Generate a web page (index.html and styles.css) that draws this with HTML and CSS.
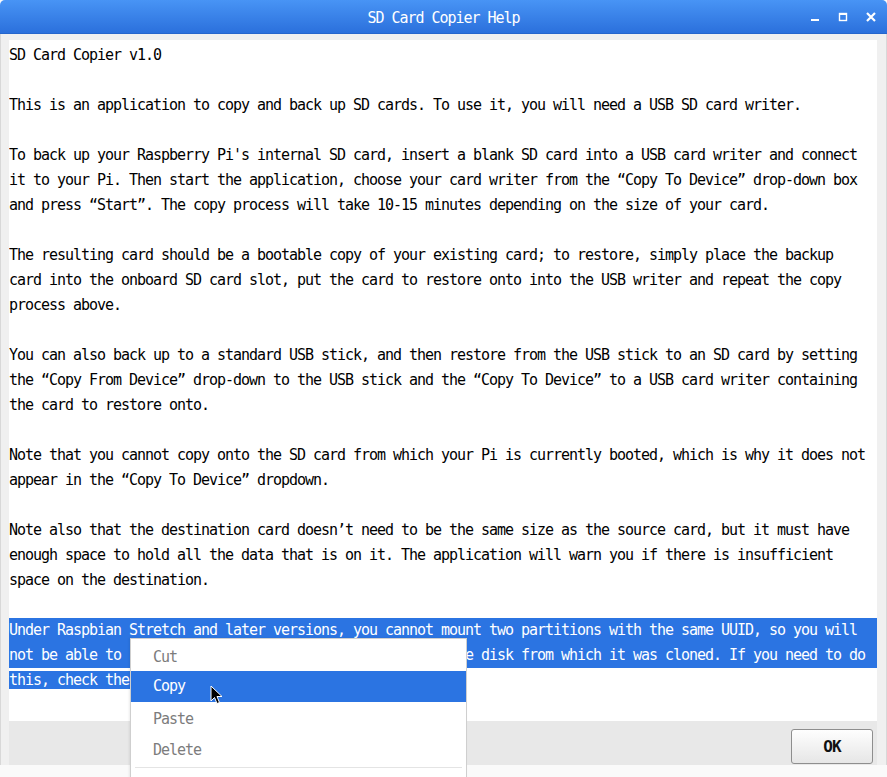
FILE: index.html
```html
<!DOCTYPE html>
<html lang="en">
<head>
    <meta charset="UTF-8">
    <title>SD Card Copier Help</title>
    <link rel="stylesheet" href="styles.css">
</head>
<body>
    <div class="window">
        <header class="titlebar">
            <span></span>
            <span class="title">SD Card Copier Help</span>
            <div class="controls">
                <svg width="12" height="12" viewBox="0 0 12 12"><rect x="2" y="8" width="8" height="2" fill="#fff"/></svg>
                <svg width="12" height="12" viewBox="0 0 12 12"><rect x="2.5" y="2.5" width="7" height="7" fill="none" stroke="#fff" stroke-width="1.4"/><rect x="2" y="2" width="8" height="2" fill="#fff"/></svg>
                <svg width="12" height="12" viewBox="0 0 12 12"><path d="M2 2 L10 10 M10 2 L2 10" stroke="#fff" stroke-width="2.2"/></svg>
            </div>
        </header>

        <div class="frame">
            <div class="textview">
                <p>SD Card Copier v1.0</p>
                <p>This is an application to copy and back up SD cards. To use it, you will need a USB SD card writer.</p>
                <p>To back up your Raspberry Pi's internal SD card, insert a blank SD card into a USB card writer and connect it to your Pi. Then start the application, choose your card writer from the “Copy To Device” drop-down box and press “Start”. The copy process will take 10-15 minutes depending on the size of your card.</p>
                <p>The resulting card should be a bootable copy of your existing card; to restore, simply place the backup card into the onboard SD card slot, put the card to restore onto into the USB writer and repeat the copy process above.</p>
                <p>You can also back up to a standard USB stick, and then restore from the USB stick to an SD card by setting the “Copy From Device” drop-down to the USB stick and the “Copy To Device” to a USB card writer containing the card to restore onto.</p>
                <p>Note that you cannot copy onto the SD card from which your Pi is currently booted, which is why it does not appear in the “Copy To Device” dropdown.</p>
                <p>Note also that the destination card doesn’t need to be the same size as the source card, but it must have enough space to hold all the data that is on it. The application will warn you if there is insufficient space on the destination.</p>
                <!-- last paragraph is selected; the part under the context menu is kept but not painted -->
                <div class="selected">
                    <div class="sel-line">Under Raspbian Stretch and later versions, you cannot mount two partitions with the same UUID, so you will</div>
                    <div class="sel-line">not be able to <span class="covered">mount a cloned SD card when booted from th</span>e disk from which it was cloned. If you need to do</div>
                    <div><span class="sel-text">this, check the<span class="covered"> “New Partition UUIDs” box before copying.</span></span></div>
                </div>
            </div>
            <div class="buttons">
                <button class="ok">OK</button>
            </div>
        </div>
        <div class="bottom"></div>

        <div class="menu">
            <div class="item disabled">Cut</div>
            <div class="item active">Copy</div>
            <div class="item disabled">Paste</div>
            <div class="item disabled">Delete</div>
            <div class="separator"></div>
        </div>

        <svg class="cursor" width="13" height="20" viewBox="0 0 13 20">
            <path d="M1 1 L1 16 L4.5 12.5 L7 18.5 L9.5 17.5 L7 11.5 L12 11.5 Z" fill="#000" stroke="#fff" stroke-width="1"/>
        </svg>
    </div>
</body>
</html>
```

FILE: styles.css
```css
* {
    margin: 0;
    padding: 0;
    box-sizing: border-box;
}

body {
    width: 887px;
    height: 777px;
    overflow: hidden;
    background: #fafafa;
    font-family: 'DejaVu Sans Mono', 'Liberation Mono', monospace;
    font-size: 15px;
    letter-spacing: -1.03px;
}

.window {
    position: relative;
    display: flex;
    flex-direction: column;
    height: 777px;
}

.titlebar {
    height: 34px;
    display: grid;
    grid-template-columns: 1fr auto 1fr;
    align-items: center;
    background: linear-gradient(#4894f5, #2b70dc);
    border-radius: 5px 5px 0 0;
    border-bottom: 1px solid #2566cc;
    color: white;
}

.title {
    padding-top: 3px;
}

.controls {
    display: flex;
    justify-content: flex-end;
    gap: 16px;
    padding-right: 10px;
}

.frame {
    flex: 1;
    display: flex;
    flex-direction: column;
    background: #f0f0f0;
    padding: 6px 9px 0 8px;
    border-left: 1px solid #d8d8d8;
    border-right: 1px solid #d8d8d8;
}

.textview {
    flex: 1;
    background: white;
    padding: 3px 0 0 0;
    line-height: 25px;
    color: #000;
    overflow: hidden;
}

.textview p {
    width: 860px;
    margin-bottom: 25px;
}

.sel-line {
    background: #2b74e2;
    color: white;
    white-space: nowrap;
}

.sel-text {
    background: #2b74e2;
    color: white;
    white-space: pre;
}

.covered {
    visibility: hidden;
}

.buttons {
    height: 44px;
    background: #e8e8e8;
    display: flex;
    justify-content: flex-end;
    align-items: flex-start;
    padding: 8px 4px 0 0;
}

.ok {
    width: 82px;
    height: 35px;
    border: 1px solid #8e8e8e;
    border-radius: 3px;
    background: linear-gradient(#fefefe, #e6e6e6);
    font-family: inherit;
    font-size: 16px;
    font-weight: bold;
    letter-spacing: -1px;
    color: #111;
}

.bottom {
    height: 12px;
    background: #fafafa;
}

.menu {
    position: absolute;
    left: 130px;
    top: 638px;
    width: 337px;
    height: 150px;
    background: white;
    border: 1px solid #cfcfcf;
    padding-top: 1px;
    box-shadow: -1px 0 2px rgba(0, 0, 0, 0.08);
}

.item {
    height: 31px;
    line-height: 31px;
    padding-left: 22px;
}

.item.disabled {
    color: #7c7c7c;
    padding-top: 2px;
}

.item.active {
    background: #2b74e2;
    color: white;
}

.separator {
    height: 1px;
    background: #e4e4e4;
    margin: 3px 4px 0;
}

.cursor {
    position: absolute;
    left: 210px;
    top: 685px;
}
```
